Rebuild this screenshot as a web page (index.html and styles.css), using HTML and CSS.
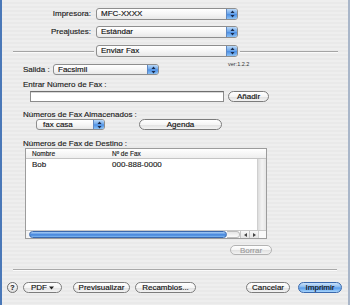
FILE: index.html
```html
<!DOCTYPE html>
<html>
<head>
<meta charset="utf-8">
<link rel="stylesheet" href="styles.css">
</head>
<body>
<div class="window">
  <div class="row r1">
    <span class="lbl">Impresora:</span>
    <div class="popup w142"><span class="ptext">MFC-XXXX</span><span class="cap"><svg width="5" height="8" viewBox="0 0 5 8"><polygon points="2.5,0.6 4.5,3.1 0.5,3.1"/><polygon points="0.5,4.9 4.5,4.9 2.5,7.4"/></svg></span></div>
  </div>
  <div class="row r2">
    <span class="lbl">Preajustes:</span>
    <div class="popup w142"><span class="ptext">Estándar</span><span class="cap"><svg width="5" height="8" viewBox="0 0 5 8"><polygon points="2.5,0.6 4.5,3.1 0.5,3.1"/><polygon points="0.5,4.9 4.5,4.9 2.5,7.4"/></svg></span></div>
  </div>
  <div class="row r3">
    <span class="hline left"></span>
    <div class="popup w142"><span class="ptext">Enviar Fax</span><span class="cap"><svg width="5" height="8" viewBox="0 0 5 8"><polygon points="2.5,0.6 4.5,3.1 0.5,3.1"/><polygon points="0.5,4.9 4.5,4.9 2.5,7.4"/></svg></span></div>
    <span class="hline right"></span>
  </div>
  <div class="row r4">
    <span class="lbl2">Salida :</span>
    <div class="popup w106"><span class="ptext">Facsimil</span><span class="cap"><svg width="5" height="8" viewBox="0 0 5 8"><polygon points="2.5,0.6 4.5,3.1 0.5,3.1"/><polygon points="0.5,4.9 4.5,4.9 2.5,7.4"/></svg></span></div>
    <span class="ver">ver:1.2.2</span>
  </div>
  <div class="text t1">Entrar Número de Fax :</div>
  <div class="row r5">
    <div class="input"></div>
    <div class="btn w41">Añadir</div>
  </div>
  <div class="text t2">Números de Fax Almacenados :</div>
  <div class="row r6">
    <div class="popup w69"><span class="ptext p7">fax casa</span><span class="cap"><svg width="5" height="8" viewBox="0 0 5 8"><polygon points="2.5,0.6 4.5,3.1 0.5,3.1"/><polygon points="0.5,4.9 4.5,4.9 2.5,7.4"/></svg></span></div>
    <div class="btn w83">Agenda</div>
  </div>
  <div class="text t3">Números de Fax de Destino :</div>
  <div class="table">
    <div class="thead">
      <span class="c1">Nombre</span><span class="c2">Nº de Fax</span>
    </div>
    <div class="tmain">
      <div class="tlist">
        <div class="trow"><span class="c1">Bob</span><span class="c2">000-888-0000</span></div>
      </div>
      <div class="vscroll"></div>
    </div>
    <div class="hscroll">
      <span class="hs-left"></span>
      <span class="thumb"></span>
      <span class="track"></span>
      <span class="arrows"><span class="arr"><svg width="3" height="4" viewBox="0 0 3 4"><polygon points="3,0 3,4 0,2"/></svg></span><span class="arr"><svg width="3" height="4" viewBox="0 0 3 4"><polygon points="0,0 0,4 3,2"/></svg></span></span>
      <span class="corner"></span>
    </div>
  </div>
  <div class="row r7">
    <div class="btn w42 disabled">Borrar</div>
  </div>
  <div class="sep"></div>
  <div class="row r8">
    <div class="help">?</div>
    <div class="btn w39 pdf">PDF <svg width="5" height="4" viewBox="0 0 5 4"><polygon points="0,0.5 5,0.5 2.5,3.5"/></svg></div>
    <div class="btn w57 prev">Previsualizar</div>
    <div class="btn w61 rec">Recambios...</div>
    <div class="btn w44 cancel">Cancelar</div>
    <div class="btn w44 primary">Imprimir</div>
  </div>
</div>
</body>
</html>
```

FILE: styles.css
```css
* { box-sizing: border-box; }
html, body { margin: 0; padding: 0; }
body {
  width: 350px;
  height: 305px;
  overflow: hidden;
  font-family: "Liberation Sans", Arial, sans-serif;
  font-size: 8px;
  color: #1c1c1c;
  -webkit-text-stroke: 0.15px currentColor;
}
.window {
  width: 350px;
  height: 305px;
  border-left: 2px solid #4a78b8;
  border-right: 2px solid #a9b6c9;
  background: repeating-linear-gradient(#eeeeee 0 2px, #e9e9e9 2px 4px);
  padding-top: 8px;
}
.row { display: flex; align-items: center; }
.r1 { height: 12px; }
.r2 { height: 12px; margin-top: 6px; }
.r3 { height: 12px; margin-top: 7px; padding-left: 11px; padding-right: 10px; }
.lbl { width: 89px; margin-right: 5px; text-align: right; line-height: 12px; }
.hline { height: 1px; background: #a4a4a4; box-shadow: 0 1px 0 #fafafa; }
.hline.left { width: 81px; margin-right: 2px; }
.hline.right { flex: 1; margin-left: 2px; }

.popup {
  height: 12px;
  display: flex;
  align-items: center;
  border: 1px solid #8e8e8e;
  border-radius: 3px;
  background: linear-gradient(#ffffff, #f6f6f6 50%, #e8e8e8);
  overflow: hidden;
  line-height: 10px;
}
.ptext { padding-left: 4px; flex: 1; white-space: nowrap; color: #111; }
.ptext.p7 { padding-left: 6px; }
.cap {
  width: 11px;
  height: 100%;
  display: flex;
  align-items: center;
  justify-content: center;
  border-left: 1px solid #5f88c2;
  background: linear-gradient(#b9d8f8, #6aa5ea 48%, #4b8ee4 52%, #8cc2f5);
}
.cap svg polygon { fill: #1a2b4c; }
.w142 { width: 142px; }
.w106 { width: 106px; }
.w69 { width: 69px; }

.r4 { height: 11px; margin-top: 7px; padding-left: 21px; }
.r4 .popup { height: 11px; }
.lbl2 { width: 30px; line-height: 11px; }
.ver {
  align-self: flex-start;
  margin-top: -3px;
  margin-left: 69px;
  font-size: 5.5px;
  line-height: 6px;
  color: #333;
  -webkit-text-stroke: 0;
}
.text { padding-left: 21px; }
.t1 { margin-top: 5px; line-height: 10px; height: 10px; }
.r5 { height: 11px; margin-top: 1px; padding-left: 28px; }
.input {
  width: 194px;
  height: 11px;
  margin-right: 4px;
  background: #fff;
  border: 1px solid #8c8c8c;
  border-top-color: #6e6e6e;
  box-shadow: inset 0 1px 0 #d8d8d8;
}
.btn {
  height: 11px;
  display: flex;
  align-items: center;
  justify-content: center;
  border: 1px solid #7c7c7c;
  border-radius: 6px;
  background: linear-gradient(#ffffff, #f5f5f5 50%, #e2e2e2 55%, #f3f3f3);
  line-height: 9px;
  white-space: nowrap;
  color: #111;
}
.w41 { width: 41px; }
.w83 { width: 83px; }
.w42 { width: 42px; }
.w39 { width: 39px; }
.w57 { width: 57px; }
.w61 { width: 61px; }
.w44 { width: 44px; }
.t2 { margin-top: 8px; line-height: 9px; height: 9px; }
.r6 { height: 11px; padding-left: 34px; }
.r6 .popup { height: 11px; margin-right: 34px; }
.t3 { margin-top: 10px; line-height: 8px; height: 8px; }

.table {
  margin-left: 23px;
  width: 242px;
  height: 91px;
  border: 1px solid #9c9c9c;
  background: #fff;
  display: flex;
  flex-direction: column;
}
.thead {
  height: 10px;
  display: flex;
  align-items: center;
  font-size: 6.5px;
  line-height: 8px;
  border-bottom: 1px solid #c4c4c4;
  background: linear-gradient(#ffffff, #eeeeee);
}
.c1 { width: 80px; padding-left: 6px; }
.c2 { padding-left: 6px; }
.tmain { flex: 1; display: flex; }
.tlist { flex: 1; }
.trow { height: 11px; line-height: 11px; display: flex; }
.vscroll {
  width: 9px;
  border-left: 1px solid #cfcfcf;
  background: linear-gradient(90deg, #dcdcdc, #f4f4f4 50%, #e6e6e6);
}
.hscroll { height: 8px; display: flex; border-top: 1px solid #c8c8c8; }
.hs-left { width: 3px; background: #f4f4f4; }
.thumb {
  width: 198px;
  border: 1px solid #3a68ad;
  border-radius: 4px;
  background: linear-gradient(#a6ccf5, #5d98e4 45%, #3d7fd9 55%, #82bbf2);
}
.track {
  width: 13px;
  background: linear-gradient(#e6e6e6, #fbfbfb);
  border-radius: 0 4px 4px 0;
  border: 1px solid #bdbdbd;
  border-left: none;
}
.arrows { width: 18px; display: flex; }
.arr {
  width: 9px;
  display: flex;
  align-items: center;
  justify-content: center;
  border-left: 1px solid #c4c4c4;
  background: linear-gradient(#f8f8f8, #e4e4e4);
}
.arr svg polygon { fill: #444; }
.corner { width: 8px; background: #fafafa; border-left: 1px solid #d0d0d0; }

.r7 { height: 10px; margin-top: 6px; padding-left: 228px; }
.r7 .btn { height: 10px; }
.disabled { color: #9d9d9d; border-color: #b3b3b3; }
.sep {
  margin-top: 14px;
  margin-left: 11px;
  width: 324px;
  height: 1px;
  background: #a9a9a9;
  box-shadow: 0 1px 0 #fbfbfb;
}
.r8 { height: 11px; margin-top: 12px; padding-left: 5px; }
.help {
  width: 11px;
  height: 11px;
  border-radius: 50%;
  border: 1px solid #6f6f6f;
  background: linear-gradient(#ffffff, #dddddd);
  display: flex;
  align-items: center;
  justify-content: center;
  font-size: 7px;
  font-weight: bold;
  line-height: 9px;
  margin-right: 5px;
}
.pdf { gap: 2px; }
.pdf svg polygon { fill: #222; }
.prev { margin-left: 11px; }
.rec { margin-left: 5px; }
.cancel { margin-left: 50px; }
.primary {
  margin-left: 8px;
  border-color: #3a69ad;
  background: linear-gradient(#cce3fb, #84b8ef 48%, #5599ea 52%, #a6d4fb);
}
```
